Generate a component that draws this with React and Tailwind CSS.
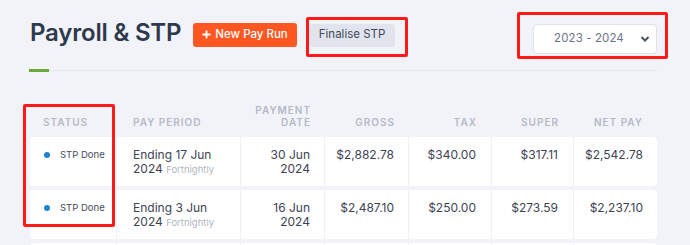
import React from "react";

const rows = [
  { period: "Ending 17 Jun", pay: ["30 Jun", "2024"], gross: "$2,882.78", tax: "$340.00", sup: "$317.11", net: "$2,542.78" },
  { period: "Ending 3 Jun", pay: ["16 Jun", "2024"], gross: "$2,487.10", tax: "$250.00", sup: "$273.59", net: "$2,237.10" },
];

const cols = "grid grid-cols-[87px_124px_84px_84px_83px_82px_83px]";

export default function App() {
  return (
    <div className="relative w-[690px] h-[245px] overflow-hidden bg-[#f2f3f8] text-[#3b4151]" style={{ fontFamily: "Inter, 'Noto Sans', sans-serif" }}>
      <div className="pl-[30px] pr-[33px]">
        <div className="flex items-center h-[70px]">
          <h1 className="text-[24px] font-semibold tracking-[-0.2px] text-[#2e394c] leading-none mt-[-4px]">Payroll &amp; STP</h1>
          <button className="ml-[12px] h-[24px] px-[9px] rounded-[3px] bg-[#ff5722] text-white text-[11.5px] font-medium flex items-center gap-[4px]">
            <svg width="9" height="9" viewBox="0 0 9 9" className="mt-[-1px]"><path d="M4.5 0.5 V8.5 M0.5 4.5 H8.5" stroke="white" strokeWidth="1.8" /></svg>
            New Pay Run
          </button>
          <button className="ml-[12px] h-[23px] px-[10px] rounded-[3px] bg-[#e1e4ed] text-[#40495a] text-[11.5px]">Finalise STP</button>
          <div className="ml-auto mt-[7px] w-[124px] h-[30px] rounded-[4px] bg-white border border-[#dde1e9] flex items-center pl-[12px] pr-[6px]">
            <span className="flex-1 text-center text-[11.5px] text-[#6d7585] tracking-[0.1px] pr-[8px]">2023 - 2024</span>
            <svg width="10" height="8" viewBox="0 0 10 8"><path d="M1.5 2 L5 5.5 L8.5 2" stroke="#4a5160" strokeWidth="2" fill="none" /></svg>
          </div>
        </div>
        <div className="relative h-px bg-[#e3e6ec]">
          <div className="absolute left-[-1px] top-[-1px] w-[20px] h-[3px] bg-[#6aa83a]" />
        </div>

        <div className={`${cols} mt-[32px] h-[34px] items-end pb-[9px] text-[10px] font-semibold tracking-[1px] text-[#b4b9c8] leading-[12px]`}>
          <div className="pl-[13px]">STATUS</div>
          <div className="pl-[16px]">PAY PERIOD</div>
          <div className="text-right pr-[14px]">PAYMENT<br />DATE</div>
          <div className="text-right pr-[14px]">GROSS</div>
          <div className="text-right pr-[15px]">TAX</div>
          <div className="text-right pr-[15px]">SUPER</div>
          <div className="text-right pr-[14px]">NET PAY</div>
        </div>

        <div className="flex flex-col gap-[4px]">
          {rows.map((r, i) => (
            <div key={i} className={`${cols} h-[49px] bg-white rounded-[4px] text-[12px] leading-[13.5px] text-[#3d4353]`}>
              <div className="flex items-start pt-[12px] pl-[14px] gap-[10px] border-r border-[#eef0f4]">
                <span className="mt-[3px] w-[6px] h-[6px] rounded-full bg-[#1d85cf] shrink-0" />
                <span className="text-[9.5px] leading-[12px] text-[#454b59]">STP Done</span>
              </div>
              <div className="pt-[11px] pl-[16px] border-r border-[#eef0f4]">
                <div>{r.period}</div>
                <div>2024 <span className="text-[9.5px] text-[#b0b5c2]">Fortnightly</span></div>
              </div>
              <div className="pt-[11px] pr-[14px] text-right border-r border-[#eef0f4]">
                <div>{r.pay[0]}</div>
                <div>{r.pay[1]}</div>
              </div>
              <div className="pt-[11px] pr-[14px] text-right border-r border-[#eef0f4]">{r.gross}</div>
              <div className="pt-[11px] pr-[15px] text-right border-r border-[#eef0f4]">{r.tax}</div>
              <div className="pt-[11px] pr-[15px] text-right border-r border-[#eef0f4]">{r.sup}</div>
              <div className="pt-[11px] pr-[14px] text-right">{r.net}</div>
            </div>
          ))}
          <div className={`${cols} h-[49px] bg-white rounded-[4px]`}>
            <div className="border-r border-[#eef0f4]" />
            <div className="border-r border-[#eef0f4]" />
            <div className="border-r border-[#eef0f4]" />
            <div className="border-r border-[#eef0f4]" />
            <div className="border-r border-[#eef0f4]" />
            <div className="border-r border-[#eef0f4]" />
            <div />
          </div>
        </div>
      </div>

      <div className="absolute left-[306px] top-[17px] w-[102px] h-[40px] border-[3px] border-[#ff1a1a] rounded-[2px]" />
      <div className="absolute left-[517px] top-[12px] w-[151px] h-[47px] border-[3px] border-[#ff1a1a] rounded-[2px]" />
      <div className="absolute left-[23px] top-[104px] w-[92px] h-[123px] border-[3px] border-[#ff1a1a] rounded-[2px]" />
    </div>
  );
}
